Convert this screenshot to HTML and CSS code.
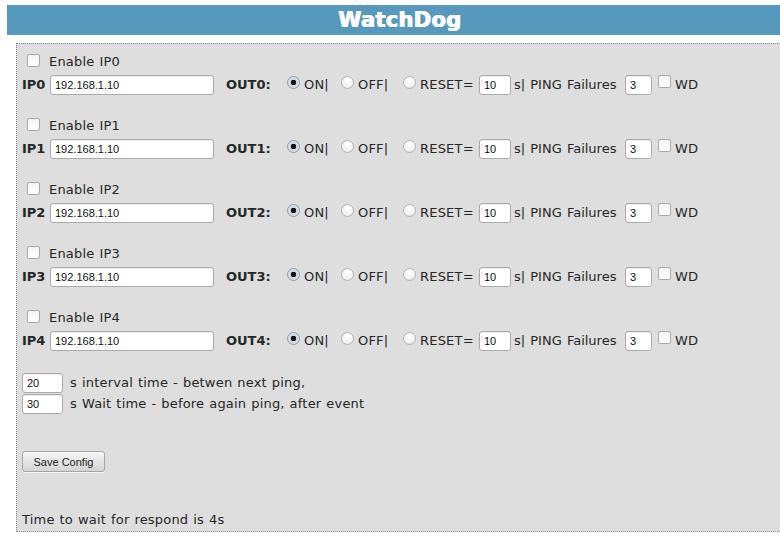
FILE: index.html
```html
<!DOCTYPE html>
<html lang="en">
<head>
    <meta charset="UTF-8">
    <title>WatchDog</title>
    <meta name="viewport" content="width=device-width">
    <link rel="stylesheet" href="styles.css">
</head>
<body>
    <h1 class="title-bar">WatchDog</h1>

    <form id="form-wd" class="panel" action="#" method="post">

        <div class="ip-group">
            <label class="enable-row"><input type="checkbox" class="chk" name="en0"> Enable IP0</label>
            <div class="ip-row">
                <span class="ip-label">IP0</span>
                <input type="text" class="ip-input" name="ip0" value="192.168.1.10">
                <span class="out-label">OUT0:</span>
                <label class="opt opt-on"><input type="radio" class="rad" name="out0" checked>ON|</label>
                <label class="opt opt-off"><input type="radio" class="rad" name="out0">OFF|</label>
                <label class="opt opt-reset"><input type="radio" class="rad" name="out0">RESET=</label>
                <input type="text" class="small-input reset-input" name="rst0" value="10">
                <span class="ping-label">s| PING Failures</span>
                <input type="text" class="small-input ping-input" name="fail0" value="3">
                <label class="wd"><input type="checkbox" class="chk" name="wd0">WD</label>
            </div>
        </div>

        <div class="ip-group">
            <label class="enable-row"><input type="checkbox" class="chk" name="en1"> Enable IP1</label>
            <div class="ip-row">
                <span class="ip-label">IP1</span>
                <input type="text" class="ip-input" name="ip1" value="192.168.1.10">
                <span class="out-label">OUT1:</span>
                <label class="opt opt-on"><input type="radio" class="rad" name="out1" checked>ON|</label>
                <label class="opt opt-off"><input type="radio" class="rad" name="out1">OFF|</label>
                <label class="opt opt-reset"><input type="radio" class="rad" name="out1">RESET=</label>
                <input type="text" class="small-input reset-input" name="rst1" value="10">
                <span class="ping-label">s| PING Failures</span>
                <input type="text" class="small-input ping-input" name="fail1" value="3">
                <label class="wd"><input type="checkbox" class="chk" name="wd1">WD</label>
            </div>
        </div>

        <div class="ip-group">
            <label class="enable-row"><input type="checkbox" class="chk" name="en2"> Enable IP2</label>
            <div class="ip-row">
                <span class="ip-label">IP2</span>
                <input type="text" class="ip-input" name="ip2" value="192.168.1.10">
                <span class="out-label">OUT2:</span>
                <label class="opt opt-on"><input type="radio" class="rad" name="out2" checked>ON|</label>
                <label class="opt opt-off"><input type="radio" class="rad" name="out2">OFF|</label>
                <label class="opt opt-reset"><input type="radio" class="rad" name="out2">RESET=</label>
                <input type="text" class="small-input reset-input" name="rst2" value="10">
                <span class="ping-label">s| PING Failures</span>
                <input type="text" class="small-input ping-input" name="fail2" value="3">
                <label class="wd"><input type="checkbox" class="chk" name="wd2">WD</label>
            </div>
        </div>

        <div class="ip-group">
            <label class="enable-row"><input type="checkbox" class="chk" name="en3"> Enable IP3</label>
            <div class="ip-row">
                <span class="ip-label">IP3</span>
                <input type="text" class="ip-input" name="ip3" value="192.168.1.10">
                <span class="out-label">OUT3:</span>
                <label class="opt opt-on"><input type="radio" class="rad" name="out3" checked>ON|</label>
                <label class="opt opt-off"><input type="radio" class="rad" name="out3">OFF|</label>
                <label class="opt opt-reset"><input type="radio" class="rad" name="out3">RESET=</label>
                <input type="text" class="small-input reset-input" name="rst3" value="10">
                <span class="ping-label">s| PING Failures</span>
                <input type="text" class="small-input ping-input" name="fail3" value="3">
                <label class="wd"><input type="checkbox" class="chk" name="wd3">WD</label>
            </div>
        </div>

        <div class="ip-group">
            <label class="enable-row"><input type="checkbox" class="chk" name="en4"> Enable IP4</label>
            <div class="ip-row">
                <span class="ip-label">IP4</span>
                <input type="text" class="ip-input" name="ip4" value="192.168.1.10">
                <span class="out-label">OUT4:</span>
                <label class="opt opt-on"><input type="radio" class="rad" name="out4" checked>ON|</label>
                <label class="opt opt-off"><input type="radio" class="rad" name="out4">OFF|</label>
                <label class="opt opt-reset"><input type="radio" class="rad" name="out4">RESET=</label>
                <input type="text" class="small-input reset-input" name="rst4" value="10">
                <span class="ping-label">s| PING Failures</span>
                <input type="text" class="small-input ping-input" name="fail4" value="3">
                <label class="wd"><input type="checkbox" class="chk" name="wd4">WD</label>
            </div>
        </div>

        <div class="time-row">
            <input type="text" class="time-input" name="interval" value="20">
            <span>s interval time - betwen next ping,</span>
        </div>
        <div class="time-row">
            <input type="text" class="time-input" name="wait" value="30">
            <span>s Wait time - before again ping, after event</span>
        </div>

        <div class="btn-row">
            <button type="submit" class="btn-save">Save Config</button>
        </div>

        <p class="footer-note">Time to wait for respond is 4s</p>
    </form>
</body>
</html>
```

FILE: styles.css
```css
*,
*::after,
*::before{
    padding: 0;
    margin: 0;
    box-sizing: border-box;
}
html{
    overflow: hidden;
    background: #fff;
}
body{
    margin: 5px 0 0 7px;
    font: normal 13px/1.2 "DejaVu Sans", Verdana, sans-serif;
    color: #262626;
}
.title-bar{
    height: 30px;
    margin-right: -13px;
    background-color: #5699bd;
    color: #fff;
    font: bold 21px/30px "DejaVu Sans", Verdana, sans-serif;
    text-align: center;
    letter-spacing: 0.3px;
    text-shadow: 0.5px 0 0 #fff, -0.5px 0 0 #fff;
}
.panel{
    margin: 8px -40px 0 9px;
    height: 489px;
    padding: 8px 0 0 5px;
    background-color: #dedede;
    border: 1px dotted #8a8a8a;
    display: flex;
    flex-direction: column;
    letter-spacing: 0.2px;
    word-spacing: 0.6px;
}

/* one block per IP */
.ip-group{
    margin-bottom: 19px;
}
.enable-row{
    height: 20px;
    display: flex;
    align-items: center;
    padding-left: 5px;
}
.enable-row .chk{
    margin-right: 9px;
    position: relative;
    top: -2px;
}
.ip-row{
    margin-top: 1px;
    height: 24px;
    display: flex;
    align-items: center;
}
.ip-label,
.out-label{
    font-weight: bold;
    letter-spacing: 0;
}
.ip-label{
    width: 28px;
}
.out-label{
    width: 61px;
    margin-left: 12px;
}

input[type="text"]{
    height: 20px;
    border: 1px solid #aaa;
    border-radius: 3px;
    background: #fff;
    font: 11px "Liberation Sans", Arial, sans-serif;
    letter-spacing: 0;
    color: #111;
    padding: 0 4px;
    box-shadow: inset 0 1px 1px rgba(0,0,0,0.08);
}
.ip-input{
    width: 164px;
}
.reset-input{
    width: 32px;
}
.ping-input{
    width: 27px;
}

/* radio options */
.opt{
    display: flex;
    align-items: center;
    white-space: nowrap;
}
.opt-on{
    width: 54px;
}
.opt-off{
    width: 62px;
}
.opt-reset{
    width: 76px;
}
.rad{
    appearance: none;
    width: 13px;
    height: 13px;
    border-radius: 50%;
    border: 1px solid #b4b4b4;
    background: radial-gradient(circle at 50% 35%, #fff 0%, #f2f2f2 60%, #dcdcdc 100%);
    margin-right: 4px;
    position: relative;
    top: -3px;
}
.rad:checked{
    border-color: #8b9bb0;
    background: radial-gradient(circle, #111 0 2.5px, #c9d3df 3px, #e8edf3 100%);
}
.chk{
    appearance: none;
    width: 13px;
    height: 13px;
    border: 1px solid #a9a9a9;
    border-radius: 2px;
    background: linear-gradient(#f4f4f4, #fff);
}
.ping-label{
    width: 114px;
    padding-left: 3px;
    white-space: nowrap;
    letter-spacing: 0;
    word-spacing: 1px;
}
.wd{
    display: flex;
    align-items: center;
    margin-left: 6px;
}
.wd .chk{
    margin-right: 4px;
    position: relative;
    top: -4px;
}

/* timing rows */
.time-row{
    height: 21px;
    display: flex;
    align-items: center;
}
.time-input{
    width: 41px;
    margin-right: 7px;
}
.btn-row{
    margin-top: 37px;
}
.btn-save{
    width: 83px;
    height: 21px;
    font: 11px "Liberation Sans", Tahoma, sans-serif;
    letter-spacing: 0;
    color: #222;
    border: 1px solid #a5a5a5;
    border-radius: 3px;
    background: linear-gradient(#f7f7f7, #e2e2e2 60%, #d4d4d4);
    box-shadow: 0 1px 0 rgba(255,255,255,0.7);
    cursor: pointer;
}
.footer-note{
    margin-top: auto;
    margin-bottom: 3px;
    line-height: 16px;
}
```
